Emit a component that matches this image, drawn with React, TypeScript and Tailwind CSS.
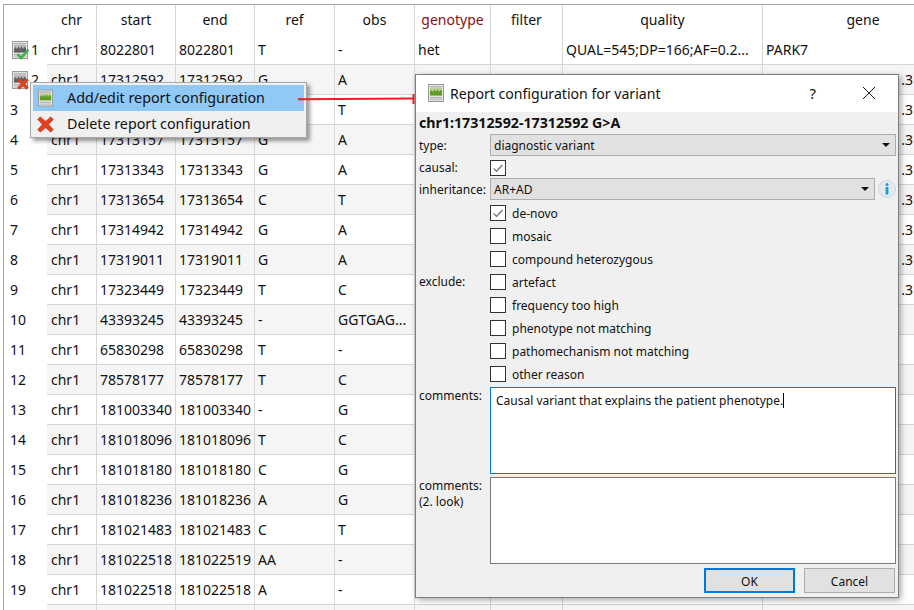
const FONT = "font-['Noto_Sans',sans-serif]";

type Row = [string, string, string, string, string, string, string, string];

const NEAR = ".3";
const rows: Row[] = [
  ["8022801", "8022801", "T", "-", "het", "", "QUAL=545;DP=166;AF=0.2...", "PARK7"],
  ["17312592", "17312592", "G", "A", "", "", "QUAL=1233;DP=1055;AF=0.4", "ATP13A2,PINK1\u00a0\u00a0\u00a0\u00a0\u00a0.3"],
  ["17312886", "17312886", "C", "T", "", "", "", NEAR],
  ["17313157", "17313157", "G", "A", "", "", "", NEAR],
  ["17313343", "17313343", "G", "A", "", "", "", NEAR],
  ["17313654", "17313654", "C", "T", "", "", "", NEAR],
  ["17314942", "17314942", "G", "A", "", "", "", NEAR],
  ["17319011", "17319011", "G", "A", "", "", "", NEAR],
  ["17323449", "17323449", "T", "C", "", "", "", NEAR],
  ["43393245", "43393245", "-", "GGTGAG...", "", "", "", ""],
  ["65830298", "65830298", "T", "-", "", "", "", ""],
  ["78578177", "78578177", "T", "C", "", "", "", ""],
  ["181003340", "181003340", "-", "G", "", "", "", ""],
  ["181018096", "181018096", "T", "C", "", "", "", ""],
  ["181018180", "181018180", "C", "G", "", "", "", ""],
  ["181018236", "181018236", "A", "G", "", "", "", ""],
  ["181021483", "181021483", "C", "T", "", "", "", ""],
  ["181022518", "181022519", "AA", "-", "", "", "", ""],
  ["181022518", "181022518", "A", "-", "", "", "", ""],
];

const COLS = "grid grid-cols-[50px_79px_79px_80px_80px_76px_72px_200px_200px]";
const CELL = "border-r border-[#d6d6d6] pl-[3px] overflow-hidden whitespace-nowrap";
const HEAD = "border-r border-[#d6d6d6] overflow-hidden whitespace-nowrap";

function ReportIcon({ dark, className }: { dark?: boolean; className?: string }) {
  return (
    <svg viewBox="0 0 16 18" className={className}>
      <rect x="0.5" y="0.5" width="15" height="17" fill="#e4e4e4" stroke="#9c9c9c" />
      <rect x="2" y="2" width="12" height="1.5" fill="#b5b5b5" />
      <rect x="2" y="4" width="12" height="7.5" fill={dark ? "#b8b8b8" : "#b9cf94"} />
      <path
        d="M2 11.5V8l1.5-2 1.5 2 1.5-2.5L8 8l1.5-3L11 8l1.5-2.5L14 7.5v4z"
        fill={dark ? "#5f5f5f" : "#5f9a22"}
      />
      <rect x="2" y="13" width="12" height="1.5" fill="#b5b5b5" />
      <rect x="2" y="15" width="12" height="1.5" fill="#c9c9c9" />
    </svg>
  );
}

function RedX({ className }: { className?: string }) {
  return (
    <svg viewBox="0 0 16 16" className={className}>
      <path
        d="M3 0.8 8 5 13 0.8 15.4 3.2 11 8l4.4 4.8L13 15.2 8 11l-5 4.2L.6 12.8 5 8 .6 3.2z"
        fill="#e2411f"
        stroke="#c8381a"
        strokeWidth="0.5"
      />
    </svg>
  );
}

function Check() {
  return (
    <svg viewBox="0 0 16 16" className="h-full w-full">
      <path d="M3 8.5 6.3 11.8 13 4.6" fill="none" stroke="#6a6a6a" strokeWidth="1.4" />
    </svg>
  );
}

function CheckBox({ checked }: { checked?: boolean }) {
  return (
    <div className="h-4 w-4 shrink-0 border border-[#333] bg-white">{checked && <Check />}</div>
  );
}

function Combo({ text }: { text: string }) {
  return (
    <div className="flex h-[22px] items-center justify-between border border-[#adadad] bg-[#e1e1e1] pl-[3px] pr-[5px]">
      <span className="pt-[2px]">{text}</span>
      <span className="h-0 w-0 border-x-[4px] border-t-[4px] border-x-transparent border-t-[#111]" />
    </div>
  );
}

const OPTIONS: [string, boolean][] = [
  ["de-novo", true],
  ["mosaic", false],
  ["compound heterozygous", false],
  ["artefact", false],
  ["frequency too high", false],
  ["phenotype not matching", false],
  ["pathomechanism not matching", false],
  ["other reason", false],
];

function Dialog() {
  return (
    <div className="absolute left-[415px] top-[74px] flex h-[524px] w-[484px] flex-col border border-[#7e7e7e] bg-[#f0f0f0] text-[12px] leading-[18px] text-[#111] shadow-[2px_2px_6px_rgba(0,0,0,0.35)]">
      <div className="flex h-[37px] shrink-0 items-center bg-white pb-[2px] pl-3 text-[14.1px]">
        <ReportIcon className="h-[18px] w-[16px]" />
        <span className="ml-[6px] pt-[2px]">Report configuration for variant</span>
        <span className="ml-auto mr-[46px] text-[15px]">?</span>
        <svg viewBox="0 0 14 14" className="mr-[22px] h-[14px] w-[14px]">
          <path d="M1 1 13 13M13 1 1 13" stroke="#222" strokeWidth="1" fill="none" />
        </svg>
      </div>
      <div className="flex min-h-0 flex-1 flex-col pl-[3px] pr-[2px]">
        <div className="mt-[2px] flex h-[18px] items-center text-[14.2px] font-bold">
          chr1:17312592-17312592 G&gt;A
        </div>
        <div className="mt-[2px] grid grid-cols-[71px_1fr] items-center">
          <span className="pt-[2px]">type:</span>
          <Combo text="diagnostic variant" />
        </div>
        <div className="mt-[3px] grid h-4 grid-cols-[71px_1fr] items-center">
          <span>causal:</span>
          <CheckBox checked />
        </div>
        <div className="mt-[3px] grid grid-cols-[71px_1fr_21px] items-center">
          <span className="pt-[2px]">inheritance:</span>
          <Combo text="AR+AD" />
          <svg viewBox="0 0 18 18" className="ml-[3px] h-[18px] w-[18px]">
            <circle cx="9" cy="9" r="8.5" fill="#e3ebf0" stroke="#d0d8de" />
            <circle cx="9" cy="4.6" r="1.5" fill="#1f9ad6" />
            <rect x="7.6" y="7" width="2.8" height="7.5" fill="#1f9ad6" />
          </svg>
        </div>
        <div className="mt-[5px] grid grid-cols-[71px_1fr]">
          <span className="pt-[68px]">exclude:</span>
          <div className="flex flex-col gap-[7px]">
            {OPTIONS.map(([t, c]) => (
              <div key={t} className="flex h-4 items-center gap-[6px]">
                <CheckBox checked={c} />
                <span className="pt-[2px]">{t}</span>
              </div>
            ))}
          </div>
        </div>
        <div className="mt-[5px] grid grid-cols-[71px_1fr]">
          <span>comments:</span>
          <div className="h-[87px] border border-[#0078d7] bg-white px-[5px] pt-[2px]">
            Causal variant that explains the patient phenotype.
            <span className="inline-block h-[15px] w-px translate-y-[3px] bg-black" />
          </div>
        </div>
        <div className="mt-[3px] grid grid-cols-[71px_1fr]">
          <span className="pt-px leading-4">
            comments:
            <br />
            (2. look)
          </span>
          <div className="h-[87px] border border-[#7a7a7a] bg-white" />
        </div>
        <div className="mt-[4px] flex justify-end gap-[9px] pr-px">
          <div className="flex h-[25px] w-[91px] items-center justify-center border-2 border-[#0078d7] bg-[#e1e1e1] pt-[2px]">
            OK
          </div>
          <div className="flex h-[25px] w-[91px] items-center justify-center border border-[#adadad] bg-[#e1e1e1] pt-[2px]">
            Cancel
          </div>
        </div>
      </div>
    </div>
  );
}

function ContextMenu() {
  return (
    <div className="absolute left-[30px] top-[82px] flex h-[56px] w-[277px] flex-col gap-px border border-[#a8a8a8] bg-[#f0f0f0] p-[2px] text-[14.3px] text-[#111] shadow-[3px_3px_4px_rgba(0,0,0,0.4)]">
      <div className="flex h-[26px] items-center bg-[#90c8f6]">
        <ReportIcon className="ml-[5px] h-[18px] w-[15px]" />
        <span className="mb-px ml-[14px]">Add/edit report configuration</span>
      </div>
      <div className="flex h-[25px] items-center">
        <RedX className="ml-[4px] h-[17px] w-[17px]" />
        <span className="mb-[2px] ml-[13px]">Delete report configuration</span>
      </div>
    </div>
  );
}

function RowCells({ r }: { r: Row }) {
  return (
    <>
      <div className={`${CELL} pl-[4px]`}>{r[0] ? "chr1" : ""}</div>
      <div className={CELL}>{r[0]}</div>
      <div className={CELL}>{r[1]}</div>
      <div className={CELL}>{r[2]}</div>
      <div className={CELL}>{r[3]}</div>
      <div className={CELL}>{r[4]}</div>
      <div className={CELL}>{r[5]}</div>
      <div className={CELL}>{r[6]}</div>
    </>
  );
}

export default function App() {
  return (
    <div className={`relative h-[610px] w-[914px] overflow-hidden bg-white pl-[3px] pt-[4px] text-[14px] leading-[29px] text-[#111] ${FONT}`}>
      <div className="h-[610px] border-l border-t border-[#a4a4a4]">
        <div className="grid h-[30px] grid-cols-[43px_1fr]">
          <div />
          <div className={`${COLS} text-center`}>
            <div className={HEAD}>chr</div>
            <div className={HEAD}>start</div>
            <div className={HEAD}>end</div>
            <div className={HEAD}>ref</div>
            <div className={HEAD}>obs</div>
            <div className={`${HEAD} text-[#8b1010]`}>genotype</div>
            <div className={HEAD}>filter</div>
            <div className={HEAD}>quality</div>
            <div>gene</div>
          </div>
        </div>
        {rows.map((r, i) => (
          <div key={i} className="grid h-[30px] grid-cols-[43px_1fr]">
            <div className="flex h-[29px] items-center pl-[6px]">
              {i < 2 && (
                <div className="relative ml-[2px] mr-[3px] h-[18px] w-[16px]">
                  <ReportIcon dark className="h-[18px] w-[16px]" />
                  <div className="absolute -bottom-px -right-[2px] h-[12px] w-[14px]">
                    {i === 0 ? (
                      <svg viewBox="0 0 14 12" className="h-full w-full">
                        <path d="M1.5 6 5 10 12.5 1.5" stroke="#3fb14a" strokeWidth="2.6" fill="none" />
                      </svg>
                    ) : (
                      <RedX className="h-full w-full" />
                    )}
                  </div>
                </div>
              )}
              <span>{i + 1}</span>
            </div>
            <div className={`${COLS} h-[30px] border-b border-[#d6d6d6] ${i % 2 === 1 ? "bg-[#f5f5f5]" : "bg-white"}`}>
              <RowCells r={r} />
              <div className="flex overflow-hidden whitespace-nowrap">
                {i === 0 ? (
                  <span className="pl-[3px]">{r[7]}</span>
                ) : (
                  <span className="ml-auto pr-[50px]">{r[7]}</span>
                )}
              </div>
            </div>
          </div>
        ))}
        <div className="grid h-[30px] grid-cols-[43px_1fr]">
          <div />
          <div className={`${COLS} h-[30px] bg-[#f5f5f5]`}>
            <RowCells r={["", "", "", "", "", "", "", ""]} />
          </div>
        </div>
      </div>
      <Dialog />
      <ContextMenu />
      <svg className="absolute left-[298px] top-[93px] h-[12px] w-[118px]" viewBox="0 0 118 12">
        <path d="M0 6.3 115 5.4" stroke="#ee1c25" strokeWidth="2" fill="none" />
        <path d="M115.5 1v10" stroke="#ee1c25" strokeWidth="2" fill="none" />
      </svg>
    </div>
  );
}
